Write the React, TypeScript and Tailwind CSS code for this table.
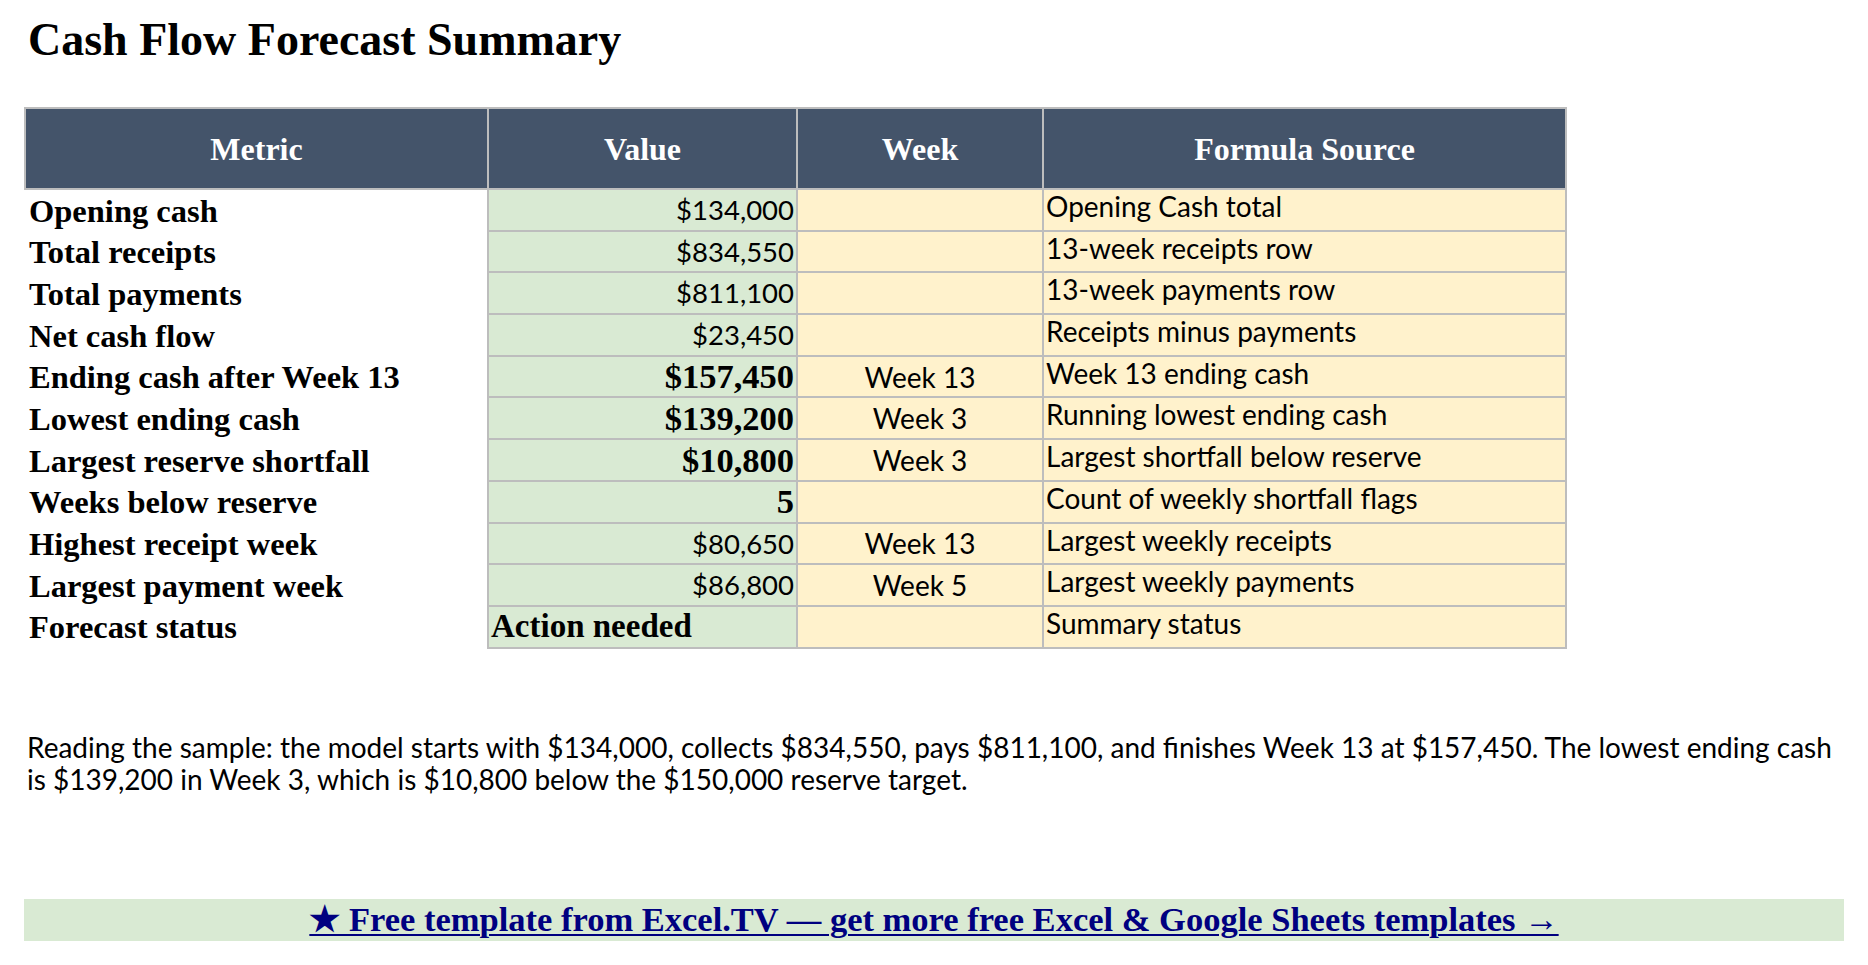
const rows = [
  { metric: 'Opening cash', value: '$134,000', week: '', source: 'Opening Cash total' },
  { metric: 'Total receipts', value: '$834,550', week: '', source: '13-week receipts row' },
  { metric: 'Total payments', value: '$811,100', week: '', source: '13-week payments row' },
  { metric: 'Net cash flow', value: '$23,450', week: '', source: 'Receipts minus payments' },
  { metric: 'Ending cash after Week 13', value: '$157,450', week: 'Week 13', source: 'Week 13 ending cash', bold: true },
  { metric: 'Lowest ending cash', value: '$139,200', week: 'Week 3', source: 'Running lowest ending cash', bold: true },
  { metric: 'Largest reserve shortfall', value: '$10,800', week: 'Week 3', source: 'Largest shortfall below reserve', bold: true },
  { metric: 'Weeks below reserve', value: '5', week: '', source: 'Count of weekly shortfall flags', bold: true },
  { metric: 'Highest receipt week', value: '$80,650', week: 'Week 13', source: 'Largest weekly receipts' },
  { metric: 'Largest payment week', value: '$86,800', week: 'Week 5', source: 'Largest weekly payments' },
  { metric: 'Forecast status', value: 'Action needed', week: '', source: 'Summary status', bold: true, left: true },
];

const serif = "font-['Liberation_Serif',serif]";
const sans = "font-['Lato',sans-serif]";

const App = () => {
  return (
    <div className="min-h-screen bg-white px-[24px] pt-[13px] text-black">
      <h1 className={`${serif} pl-[4px] text-[46px] font-bold leading-[53px]`}>Cash Flow Forecast Summary</h1>

      {/* Summary table */}
      <div className="mt-[41px] w-[1543px]">
        <div className={`${serif} grid h-[83px] grid-cols-[463px_309px_246px_525px] bg-[#44546a] text-[32px] font-bold leading-none text-white`}>
          <div className="flex items-center justify-center border-y-2 border-l-2 border-[#bdbdbd]">Metric</div>
          <div className="flex items-center justify-center border-y-2 border-l-2 border-[#bdbdbd]">Value</div>
          <div className="flex items-center justify-center border-y-2 border-l-2 border-[#bdbdbd]">Week</div>
          <div className="flex items-center justify-center border-2 border-[#bdbdbd]">Formula Source</div>
        </div>

        {rows.map((r) => (
          <div key={r.metric} className="grid h-[41.7px] grid-cols-[463px_309px_246px_525px] leading-none">
            <div className={`${serif} flex items-center pl-[5px] text-[32.5px] font-bold`}>{r.metric}</div>
            <div
              className={`flex items-center border-b-2 border-l-2 border-[#bdbdbd] bg-[#d9ead3] ${
                r.left ? 'justify-start pl-[2px] text-[33px]' : 'justify-end pr-[2px]'
              } ${r.bold ? `${serif} font-bold ${r.left ? '' : 'text-[34.5px]'}` : `${sans} text-[27.5px]`}`}
            >
              {r.value}
            </div>
            <div className={`${sans} flex items-center justify-center border-b-2 border-l-2 border-[#bdbdbd] bg-[#fff2cc] text-[28px]`}>
              {r.week}
            </div>
            <div className={`${sans} flex items-start border-x-2 border-b-2 border-[#bdbdbd] bg-[#fff2cc] pl-[2px] pt-[2px] text-[28px] leading-[28px]`}>
              {r.source}
            </div>
          </div>
        ))}
      </div>

      <p className={`${sans} mt-[82px] w-[1820px] pl-[3px] text-[28px] leading-[32px]`}>
        Reading the sample: the model starts with $134,000, collects $834,550, pays $811,100, and finishes Week 13 at
        $157,450. The lowest ending cash is $139,200 in Week 3, which is $10,800 below the $150,000 reserve target.
      </p>

      <div className="mt-[104px] flex h-[42px] w-[1820px] items-center justify-center bg-[#d9ead3]">
        <a
          href="#"
          className={`${serif} text-[34.5px] font-bold leading-none text-[#000080] underline decoration-2 underline-offset-[3px]`}
        >
          ★ Free template from Excel.TV — get more free Excel &amp; Google Sheets templates →
        </a>
      </div>
    </div>
  );
};

export default App;
